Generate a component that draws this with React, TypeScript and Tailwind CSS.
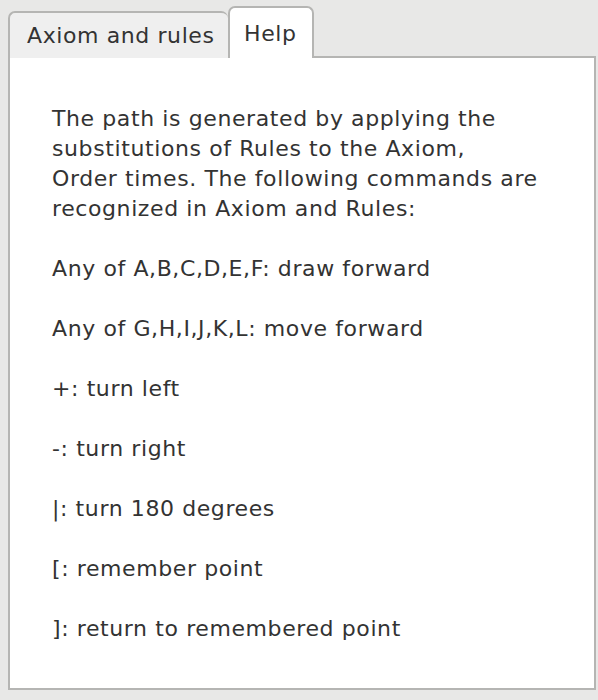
import { useState } from 'react';

const commands = [
  'Any of A,B,C,D,E,F: draw forward',
  'Any of G,H,I,J,K,L: move forward',
  '+: turn left',
  '-: turn right',
  '|: turn 180 degrees',
  '[: remember point',
  ']: return to remembered point',
];

export default function App() {
  const [tab, setTab] = useState('help');

  const tabBase = 'h-[47px] text-[22px] tracking-[0.6px] text-[#333] border-2 border-b-0 border-[#b5b5b3] rounded-t-[7px]';

  return (
    <div
      className="w-[598px] h-[700px] bg-[#e8e8e7] pt-[6px] pl-[8px] pr-[2px] pb-[10px] flex flex-col"
      style={{ fontFamily: '"DejaVu Sans", sans-serif' }}
    >
      <div className="flex items-end h-[52px] -mb-[2px] relative z-10">
        <button
          type="button"
          onClick={() => setTab('axiom')}
          className={`${tabBase} w-[220px] text-left pl-[17px] ${
            tab === 'axiom' ? 'bg-white h-[52px]' : 'bg-[#efefef] border-r-0'
          }`}
        >
          Axiom and rules
        </button>
        <button
          type="button"
          onClick={() => setTab('help')}
          className={`${tabBase} w-[86px] pl-[14px] text-left ${
            tab === 'help' ? 'bg-white h-[52px]' : 'bg-[#efefef]'
          }`}
        >
          Help
        </button>
      </div>
      <div className="flex-1 bg-white border-2 border-[#b5b5b3] pl-[42px] pt-[46px] text-[22px] tracking-[0.6px] leading-[30px] text-[#333]">
        {tab === 'help' ? (
          <div className="flex flex-col gap-[30px]">
            <p>
              The path is generated by applying the
              <br />
              substitutions of Rules to the Axiom,
              <br />
              Order times. The following commands are
              <br />
              recognized in Axiom and Rules:
            </p>
            {commands.map((c, i) => (
              <p key={i}>{c}</p>
            ))}
          </div>
        ) : null}
      </div>
    </div>
  );
}
